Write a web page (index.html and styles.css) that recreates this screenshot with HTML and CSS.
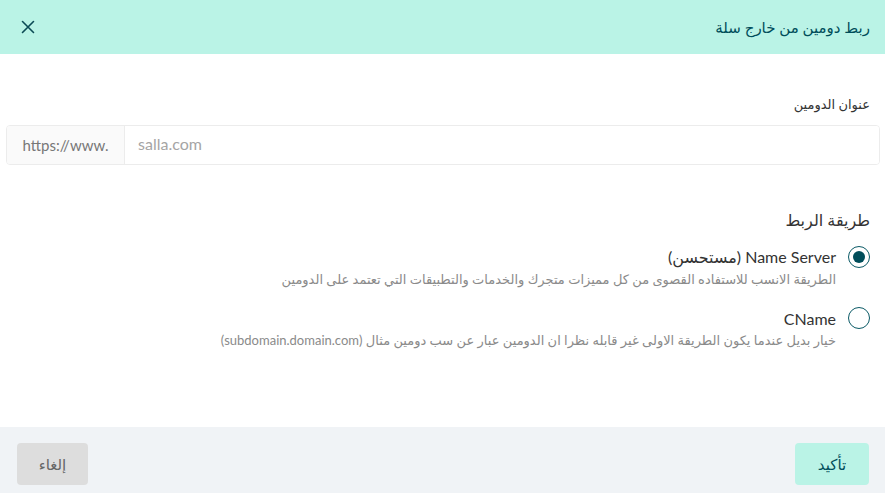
FILE: index.html
```html
<!DOCTYPE html>
<html lang="ar" dir="rtl">
<head>
    <meta charset="UTF-8">
    <meta name="viewport" content="width=device-width, initial-scale=1.0">
    <title>ربط دومين من خارج سلة</title>
    <link rel="stylesheet" href="styles.css">
</head>
<body>
    <div class="modal">
        <header class="modal-header">
            <h1>ربط دومين من خارج سلة</h1>
            <button class="close-button" aria-label="إغلاق">
                <svg width="14" height="14" viewBox="0 0 14 14">
                    <path d="M1.5 1.5 L12.5 12.5 M12.5 1.5 L1.5 12.5" stroke="#0b4a55" stroke-width="1.6" stroke-linecap="round"/>
                </svg>
            </button>
        </header>

        <section class="modal-body">
            <label class="field-label" for="domain">عنوان الدومين</label>
            <div class="input-group">
                <span class="prefix">https://www.</span>
                <input type="text" id="domain" placeholder="salla.com" autofocus>
            </div>

            <h2 class="section-title">طريقة الربط</h2>

            <label class="option">
                <span class="option-row">
                    <input type="radio" name="method" value="ns" checked>
                    <span class="radio"></span>
                    <span class="option-name">Name Server (مستحسن)</span>
                </span>
                <span class="option-desc">الطريقة الانسب للاستفاده القصوى من كل مميزات متجرك والخدمات والتطبيقات التي تعتمد على الدومين</span>
            </label>

            <label class="option second">
                <span class="option-row">
                    <input type="radio" name="method" value="cname">
                    <span class="radio"></span>
                    <span class="option-name">CName</span>
                </span>
                <span class="option-desc">خيار بديل عندما يكون الطريقة الاولى غير قابله نظرا ان الدومين عبار عن سب دومين مثال (subdomain.domain.com)</span>
            </label>
        </section>

        <footer class="modal-footer">
            <button class="confirm-button">تأكيد</button>
            <button class="cancel-button">إلغاء</button>
        </footer>
    </div>
</body>
</html>
```

FILE: styles.css
```css
body {
    font-family: Lato, "DejaVu Sans", sans-serif;
    margin: 0;
    padding: 0;
    background-color: #ffffff;
    color: #333;
}

.modal {
    display: flex;
    flex-direction: column;
    height: 100vh;
}

.modal-header {
    height: 54px;
    background-color: #baf3e6;
    display: flex;
    align-items: center;
    justify-content: space-between;
    padding: 0 15px 0 21px;
    flex-shrink: 0;
}

.modal-header h1 {
    margin: 0;
    font-size: 15px;
    font-weight: normal;
    color: #004d5a;
}

.close-button {
    background: none;
    border: none;
    padding: 0;
    width: 14px;
    height: 14px;
    cursor: pointer;
    display: flex;
}

.modal-body {
    flex: 1;
    padding: 40px 5px 0 5px;
}

.field-label {
    display: block;
    font-size: 13px;
    line-height: 20px;
    padding-right: 10px;
    color: #333;
}

.input-group {
    direction: ltr;
    display: flex;
    height: 40px;
    margin: 11px 0 0 1px;
    border: 1px solid #ececec;
    border-radius: 4px;
    box-sizing: border-box;
    overflow: hidden;
}

.input-group .prefix {
    width: 117px;
    background-color: #fafafa;
    border-right: 1px solid #ececec;
    color: #777;
    font-size: 15px;
    display: flex;
    align-items: center;
    justify-content: center;
    padding-left: 0;
}

.input-group input {
    flex: 1;
    border: none;
    outline: none;
    padding: 0 13px 3px 13px;
    font-family: Lato, "DejaVu Sans", sans-serif;
    font-size: 16px;
    color: #333;
    caret-color: #222;
}

.input-group input::placeholder {
    color: #a5a5a5;
}

.section-title {
    margin: 43px 0 0 0;
    padding-right: 10px;
    font-size: 16px;
    line-height: 24px;
    font-weight: normal;
    color: #333;
}

.option {
    display: block;
    padding-right: 10px;
    margin-top: 13px;
    cursor: pointer;
}

.option.second {
    margin-top: 17px;
}

.option-row {
    display: flex;
    align-items: center;
    gap: 12px;
    height: 24px;
}

.option-row input {
    display: none;
}

.radio {
    width: 22px;
    height: 22px;
    box-sizing: border-box;
    border: 1.5px solid #0b5a66;
    border-radius: 50%;
    display: flex;
    align-items: center;
    justify-content: center;
}

.option-row input:checked + .radio::after {
    content: "";
    width: 12px;
    height: 12px;
    border-radius: 50%;
    background-color: #004d5a;
}

.option-name {
    font-size: 16px;
    color: #333;
}

.option-desc {
    display: block;
    padding-right: 34px;
    font-size: 13px;
    line-height: 20px;
    color: #8a8a8a;
}

.modal-footer {
    height: 66px;
    background-color: #f0f3f6;
    display: flex;
    align-items: flex-start;
    justify-content: space-between;
    padding: 16px 16px 0 17px;
    box-sizing: border-box;
    flex-shrink: 0;
}

.modal-footer button {
    height: 42px;
    border: none;
    border-radius: 4px;
    font-family: Lato, "DejaVu Sans", sans-serif;
    font-size: 15px;
    cursor: pointer;
}

.confirm-button {
    width: 74px;
    background-color: #baf3e6;
    color: #004d5a;
}

.cancel-button {
    width: 71px;
    background-color: #dddddd;
    color: #666;
}
```
